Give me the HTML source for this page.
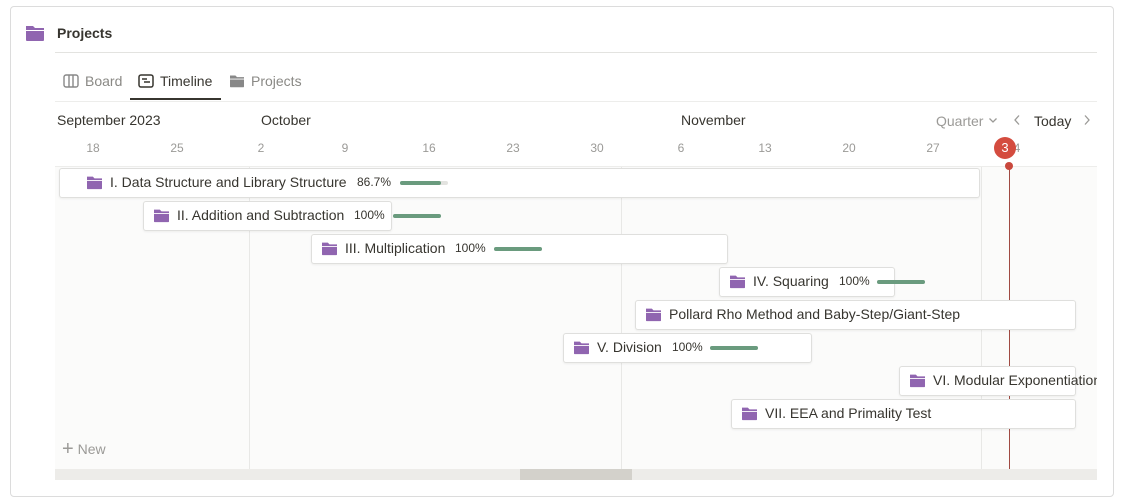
<!DOCTYPE html>
<html><head><meta charset="utf-8"><style>
*{box-sizing:border-box;margin:0;padding:0}
body{width:1124px;height:502px;background:#fff;font-family:"Liberation Sans",sans-serif;position:relative;overflow:hidden;color:#37352f}
.abs{position:absolute}
.card{left:10px;top:6px;width:1104px;height:491px;border:1px solid #dcdcdc;border-radius:4px}
.t{position:absolute;white-space:nowrap}
.bar{position:absolute;height:30px;background:#fff;border:1px solid #dfdfdd;border-radius:3px;box-shadow:0 1px 2px rgba(0,0,0,.06);font-size:14px;line-height:27px;white-space:nowrap;overflow:visible}
.bar svg{position:absolute;top:6px}
.pct{font-size:12px;color:#37352f}
.pb{position:absolute;top:12px;height:4px;width:48px;border-radius:2px;background:#e3e3e0}
.pb i{display:block;height:4px;border-radius:2px;background:#6a9b7e}
.d{position:absolute;top:141px;font-size:12px;color:#9b9a97;transform:translateX(-50%)}
</style></head><body>
<div class="abs card"></div>
<svg class="abs" style="left:25px;top:24px" width="20" height="18" viewBox="0 0 20 18"><path d="M1 2h7l2 2h9v2H1z" fill="#9065b0"/><path d="M1 7h18v9a1 1 0 0 1-1 1H2a1 1 0 0 1-1-1z" fill="#9065b0"/></svg>
<div class="t" style="left:57px;top:25px;font-size:14px;font-weight:bold">Projects</div>
<div class="abs" style="left:55px;top:52px;width:1042px;height:1px;background:#e3e3e0"></div>
<svg class="abs" style="left:63px;top:74px" width="16" height="14" viewBox="0 0 16 14"><rect x="1" y="1" width="14" height="12" rx="2" fill="none" stroke="#888" stroke-width="1.4"/><path d="M6 1v12M10 1v12" stroke="#888" stroke-width="1.4"/></svg>
<div class="t" style="left:85px;top:73px;font-size:14px;color:#8a8985">Board</div>
<svg class="abs" style="left:138px;top:74px" width="16" height="14" viewBox="0 0 16 14"><rect x="1" y="1" width="14" height="12" rx="2" fill="none" stroke="#37352f" stroke-width="1.5"/><path d="M4 5h5M6 8h6" stroke="#37352f" stroke-width="1.4"/></svg>
<div class="t" style="left:160px;top:73px;font-size:14px;color:#37352f">Timeline</div>
<div class="abs" style="left:130px;top:98px;width:91px;height:2px;background:#37352f"></div>
<svg class="abs" style="left:229px;top:74px" width="16" height="14" viewBox="0 0 20 18"><path d="M1 2h7l2 2h9v2H1z" fill="#888"/><path d="M1 7h18v9a1 1 0 0 1-1 1H2a1 1 0 0 1-1-1z" fill="#888"/></svg>
<div class="t" style="left:251px;top:73px;font-size:14px;color:#8a8985">Projects</div>
<div class="abs" style="left:55px;top:101px;width:1042px;height:1px;background:#ededeb"></div>
<div class="t" style="left:57px;top:112px;font-size:14px">September 2023</div>
<div class="t" style="left:261px;top:112px;font-size:14px">October</div>
<div class="t" style="left:681px;top:112px;font-size:14px">November</div>
<div class="t" style="left:936px;top:113px;font-size:14px;color:#9b9a97">Quarter</div>
<svg class="abs" style="left:988px;top:117px" width="10" height="7" viewBox="0 0 10 7"><path d="M1.5 1.5l3.5 3.5 3.5-3.5" fill="none" stroke="#9b9a97" stroke-width="1.3"/></svg>
<svg class="abs" style="left:1013px;top:114px" width="8" height="12" viewBox="0 0 8 12"><path d="M6 1.5L2 6l4 4.5" fill="none" stroke="#9b9a97" stroke-width="1.3"/></svg>
<div class="t" style="left:1034px;top:113px;font-size:14px">Today</div>
<svg class="abs" style="left:1083px;top:114px" width="8" height="12" viewBox="0 0 8 12"><path d="M2 1.5L6 6l-4 4.5" fill="none" stroke="#9b9a97" stroke-width="1.3"/></svg>
<div class="d" style="left:93px">18</div><div class="d" style="left:177px">25</div><div class="d" style="left:261px">2</div><div class="d" style="left:345px">9</div><div class="d" style="left:429px">16</div><div class="d" style="left:513px">23</div><div class="d" style="left:597px">30</div><div class="d" style="left:681px">6</div><div class="d" style="left:765px">13</div><div class="d" style="left:849px">20</div><div class="d" style="left:933px">27</div><div class="d" style="left:1017px">4</div>
<div class="abs" style="left:55px;top:166px;width:1042px;height:303px;background:#fbfbfa;border-top:1px solid #ededeb;overflow:hidden">
 <div class="abs" style="left:194px;top:0;width:1px;height:303px;background:#e8e8e6"></div>
 <div class="abs" style="left:566px;top:0;width:1px;height:303px;background:#e8e8e6"></div>
 <div class="abs" style="left:926px;top:0;width:1px;height:303px;background:#e8e8e6"></div>
 <div class="abs" style="left:954px;top:0;width:1px;height:303px;background:#a04a42"></div>
 <div class="t" style="left:7px;top:270px;font-size:14px;color:#9b9a97"><span style="font-size:20px;position:relative;top:1px;font-weight:300">+</span> New</div>
</div>
<div class="abs" style="left:1005px;top:162px;width:8px;height:8px;border-radius:50%;background:#c9483d"></div>
<div class="abs" style="left:994px;top:137px;width:22px;height:22px;border-radius:50%;background:#d44c3f;color:#fff;font-size:13px;text-align:center;line-height:22px">3</div>
<div class="abs" style="left:55px;top:469px;width:1042px;height:11px;background:#edece9"></div>
<div class="abs" style="left:520px;top:469px;width:112px;height:11px;background:#d3d1cb"></div>
<div style="position:absolute;left:55px;top:0;width:1042px;height:502px;overflow:hidden">
<div class="bar" style="left:4px;top:168px;width:921px"><svg style="left:26px" width="17" height="15" viewBox="0 0 20 18"><path d="M1 2h7l2 2h9v2H1z" fill="#9065b0"/><path d="M1 7h18v9a1 1 0 0 1-1 1H2a1 1 0 0 1-1-1z" fill="#9065b0"/></svg><span class="t" style="left:50px">I. Data Structure and Library Structure</span><span class="t pct" style="left:297px">86.7%</span><span class="pb" style="left:340px"><i style="width:41px"></i></span></div>
<div class="bar" style="left:88px;top:201px;width:249px"><svg style="left:9px" width="17" height="15" viewBox="0 0 20 18"><path d="M1 2h7l2 2h9v2H1z" fill="#9065b0"/><path d="M1 7h18v9a1 1 0 0 1-1 1H2a1 1 0 0 1-1-1z" fill="#9065b0"/></svg><span class="t" style="left:33px">II. Addition and Subtraction</span><span class="t pct" style="left:210px">100%</span><span class="pb" style="left:249px"><i style="width:48px"></i></span></div>
<div class="bar" style="left:256px;top:234px;width:417px"><svg style="left:9px" width="17" height="15" viewBox="0 0 20 18"><path d="M1 2h7l2 2h9v2H1z" fill="#9065b0"/><path d="M1 7h18v9a1 1 0 0 1-1 1H2a1 1 0 0 1-1-1z" fill="#9065b0"/></svg><span class="t" style="left:33px">III. Multiplication</span><span class="t pct" style="left:143px">100%</span><span class="pb" style="left:182px"><i style="width:48px"></i></span></div>
<div class="bar" style="left:664px;top:267px;width:176px"><svg style="left:9px" width="17" height="15" viewBox="0 0 20 18"><path d="M1 2h7l2 2h9v2H1z" fill="#9065b0"/><path d="M1 7h18v9a1 1 0 0 1-1 1H2a1 1 0 0 1-1-1z" fill="#9065b0"/></svg><span class="t" style="left:33px">IV. Squaring</span><span class="t pct" style="left:119px">100%</span><span class="pb" style="left:157px"><i style="width:48px"></i></span></div>
<div class="bar" style="left:580px;top:300px;width:441px"><svg style="left:9px" width="17" height="15" viewBox="0 0 20 18"><path d="M1 2h7l2 2h9v2H1z" fill="#9065b0"/><path d="M1 7h18v9a1 1 0 0 1-1 1H2a1 1 0 0 1-1-1z" fill="#9065b0"/></svg><span class="t" style="left:33px">Pollard Rho Method and Baby-Step/Giant-Step</span></div>
<div class="bar" style="left:508px;top:333px;width:249px"><svg style="left:9px" width="17" height="15" viewBox="0 0 20 18"><path d="M1 2h7l2 2h9v2H1z" fill="#9065b0"/><path d="M1 7h18v9a1 1 0 0 1-1 1H2a1 1 0 0 1-1-1z" fill="#9065b0"/></svg><span class="t" style="left:33px">V. Division</span><span class="t pct" style="left:108px">100%</span><span class="pb" style="left:146px"><i style="width:48px"></i></span></div>
<div class="bar" style="left:844px;top:366px;width:177px"><svg style="left:9px" width="17" height="15" viewBox="0 0 20 18"><path d="M1 2h7l2 2h9v2H1z" fill="#9065b0"/><path d="M1 7h18v9a1 1 0 0 1-1 1H2a1 1 0 0 1-1-1z" fill="#9065b0"/></svg><span class="t" style="left:33px">VI. Modular Exponentiation</span></div>
<div class="bar" style="left:676px;top:399px;width:345px"><svg style="left:9px" width="17" height="15" viewBox="0 0 20 18"><path d="M1 2h7l2 2h9v2H1z" fill="#9065b0"/><path d="M1 7h18v9a1 1 0 0 1-1 1H2a1 1 0 0 1-1-1z" fill="#9065b0"/></svg><span class="t" style="left:33px">VII. EEA and Primality Test</span></div>
</div>
</body></html>
